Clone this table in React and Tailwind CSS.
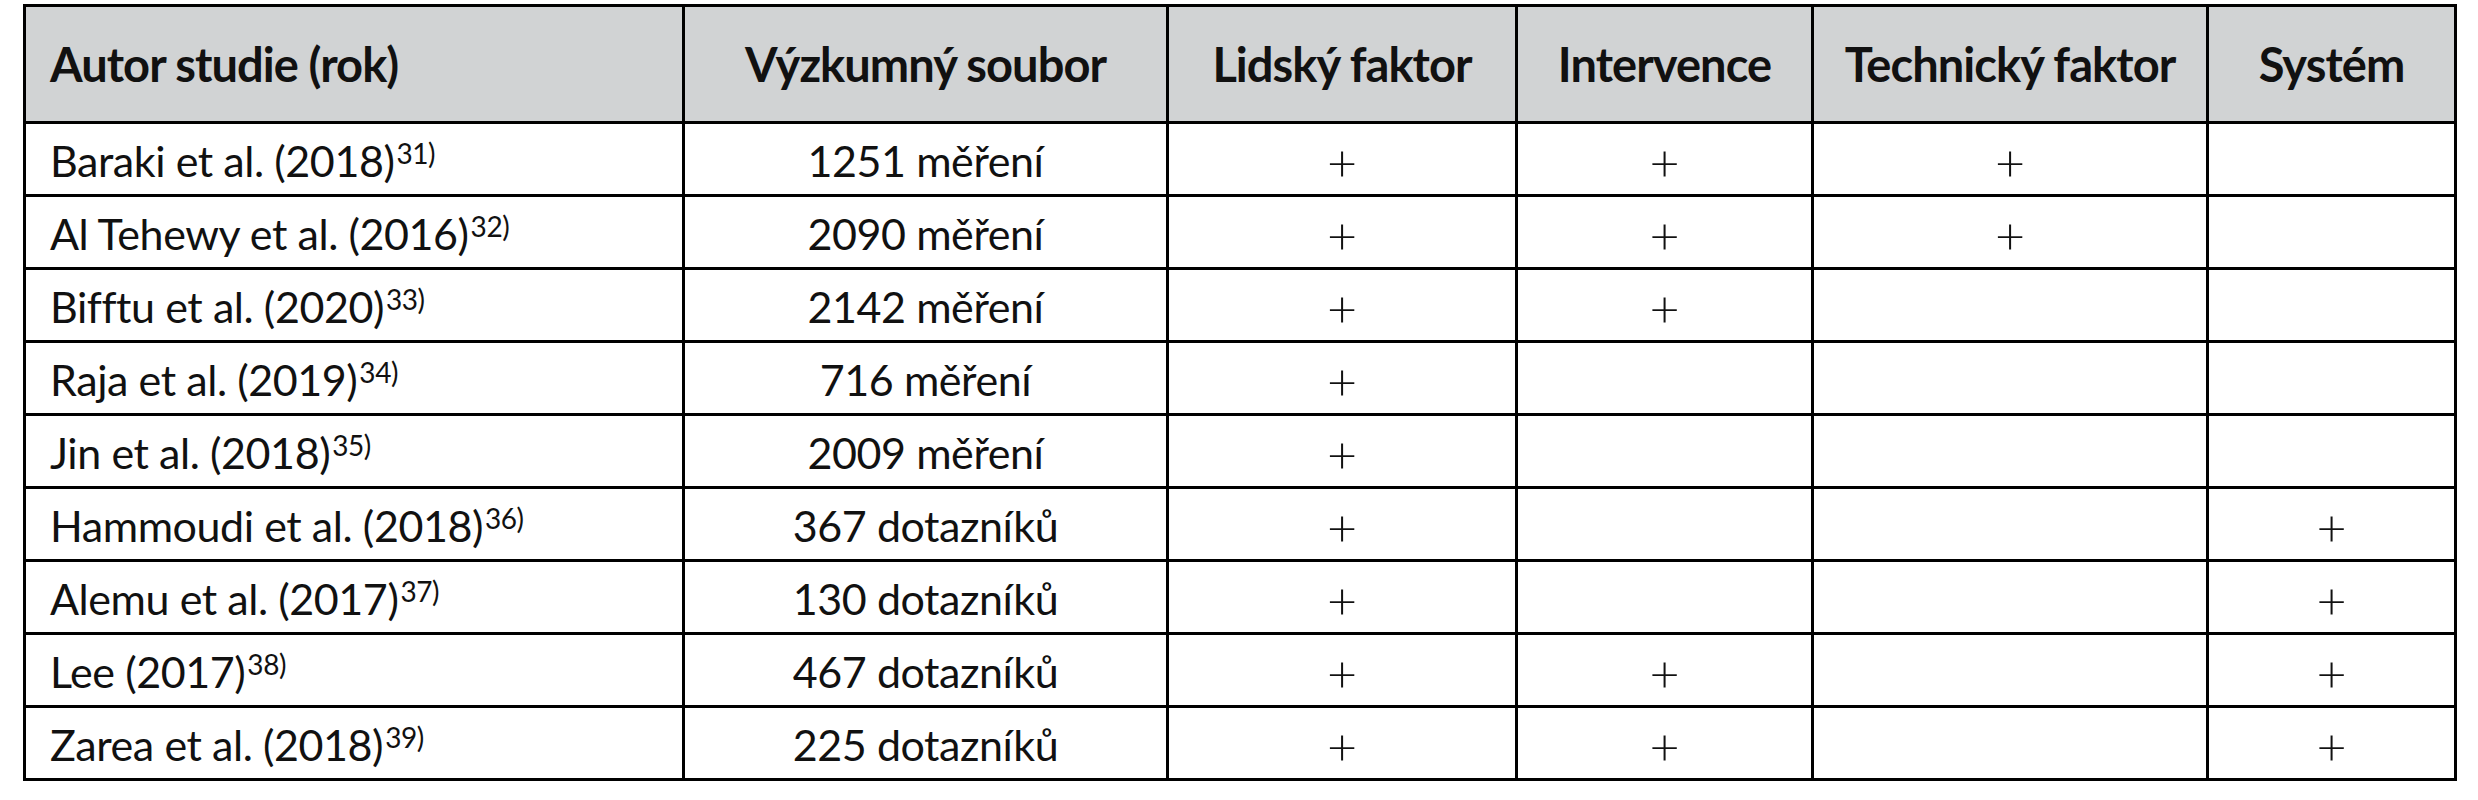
import React from 'react'

const headers = [
  'Autor studie (rok)',
  'Výzkumný soubor',
  'Lidský faktor',
  'Intervence',
  'Technický faktor',
  'Systém',
]

const rows = [
  { author: 'Baraki et al. (2018)', ref: '31)', sample: '1251 měření', marks: [1, 1, 1, 0] },
  { author: 'Al Tehewy et al. (2016)', ref: '32)', sample: '2090 měření', marks: [1, 1, 1, 0] },
  { author: 'Bifftu et al. (2020)', ref: '33)', sample: '2142 měření', marks: [1, 1, 0, 0] },
  { author: 'Raja et al. (2019)', ref: '34)', sample: '716 měření', marks: [1, 0, 0, 0] },
  { author: 'Jin et al. (2018)', ref: '35)', sample: '2009 měření', marks: [1, 0, 0, 0] },
  { author: 'Hammoudi et al. (2018)', ref: '36)', sample: '367 dotazníků', marks: [1, 0, 0, 1] },
  { author: 'Alemu et al. (2017)', ref: '37)', sample: '130 dotazníků', marks: [1, 0, 0, 1] },
  { author: 'Lee (2017)', ref: '38)', sample: '467 dotazníků', marks: [1, 1, 0, 1] },
  { author: 'Zarea et al. (2018)', ref: '39)', sample: '225 dotazníků', marks: [1, 1, 0, 1] },
]

const App = () => {
  return (
    <div className="w-[2478px] h-[800px] bg-white pt-[4px] pl-[23px] font-['Lato','Liberation_Sans',sans-serif] text-[#111]">
      <div className="grid w-fit grid-cols-[656px_481px_346px_293px_392px_245px] grid-rows-[114px_repeat(9,70px)] gap-[3px] bg-black p-[3px]">
        {headers.map((h, i) => (
          <div
            key={h}
            className={`bg-[#d1d3d4] flex items-center text-[47px] font-bold tracking-[-0.02em] ${
              i === 0 ? 'pl-[24px]' : 'justify-center'
            }`}
          >
            {h}
          </div>
        ))}
        {rows.map((r) => (
          <React.Fragment key={r.author}>
            <div className="bg-white flex items-center pl-[24px] pt-[4px] text-[43px] tracking-[-0.01em]">
              <span>
                {r.author}
                <span className="ml-[2px] text-[28px] leading-none align-[13px]">{r.ref}</span>
              </span>
            </div>
            <div className="bg-white flex items-center justify-center pt-[4px] text-[43px] tracking-[-0.01em]">
              {r.sample}
            </div>
            {r.marks.map((m, j) => (
              <div key={j} className="bg-white flex items-center justify-center pt-[4px] text-[52px] font-light">
                {m ? '+' : ''}
              </div>
            ))}
          </React.Fragment>
        ))}
      </div>
    </div>
  )
}

export default App
